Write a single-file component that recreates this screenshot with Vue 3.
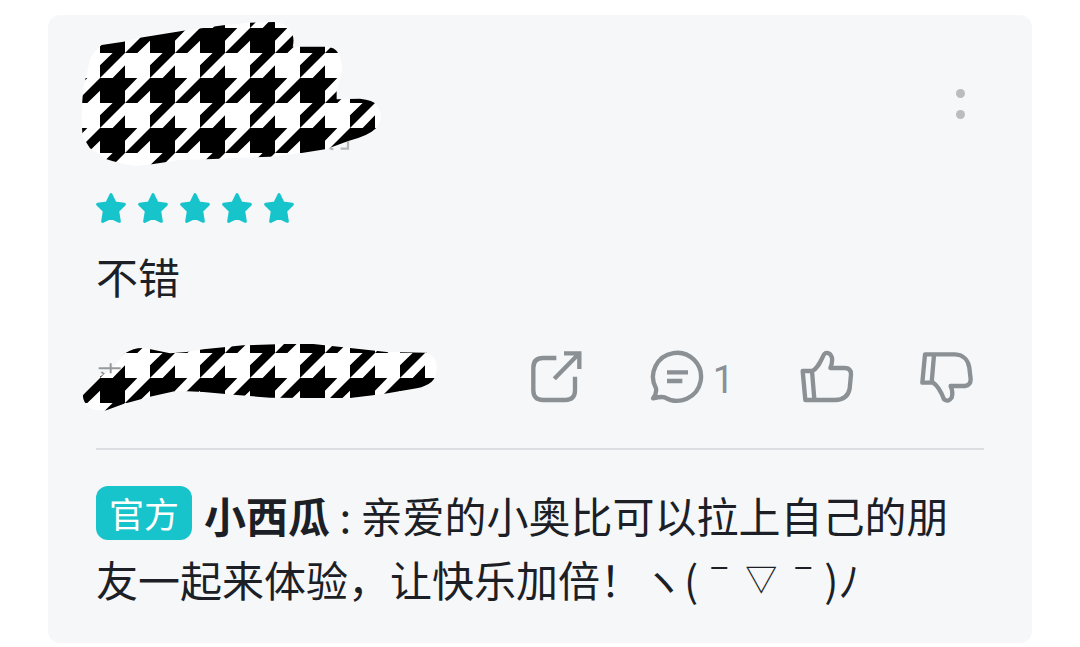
<script setup>
const stars = [1, 2, 3, 4, 5]
const commentCount = 1

// One houndstooth check, drawn in a 150-unit tile
const tooth = 'M0 0H112L75 38V75L150 0V38L112 75H75L0 150V112L38 75H0ZM75 112V150H38Z'

function tiles(left, top, columns, rows) {
  const list = []
  for (let r = 0; r < rows; r++) {
    for (let c = 0; c < columns; c++) {
      list.push(`translate(${left + c * 150} ${top + r * 150})`)
    }
  }
  return list
}

const authorTiles = tiles(-60, -96, 7, 4)
const deviceTiles = tiles(-60, -6, 8, 2)
</script>

<template>
  <main class="page">
    <article class="card">
      <header class="head">
        <svg class="author-mask" viewBox="30 30 906 444" aria-hidden="true">
          <defs>
            <clipPath id="author-shape">
              <path d="M40 230Q50 195 55 170Q60 130 95 105L160 95L210 83L340 62L460 46L540 38L612 36Q645 38 658 58Q676 80 668 110H770Q795 112 804 128Q822 165 812 200L800 240V268L870 266Q910 270 920 285Q945 320 918 355Q895 378 835 393L770 417L700 428L600 440L430 447L330 450L250 462L200 468Q150 462 110 448L60 415L38 380Q34 340 35 300Z" />
            </clipPath>
          </defs>
          <path d="M778 414L790 418M812 416H834V390" fill="none" stroke="#b5b8bb" stroke-width="7" />
          <g clip-path="url(#author-shape)">
            <rect x="30" y="30" width="906" height="444" fill="#fff" />
            <path v-for="t in authorTiles" :key="t" :d="tooth" :transform="t" />
          </g>
        </svg>
        <button class="more" type="button" aria-label="更多">
          <span class="dot"></span>
          <span class="dot"></span>
        </button>
      </header>

      <div class="stars" role="img" aria-label="5 星">
        <svg v-for="s in stars" :key="s" viewBox="0 0 90 90" aria-hidden="true">
          <path d="M45 5L57 30L85 34L65 54L70 85L45 73L20 85L25 54L5 34L33 30Z" />
        </svg>
      </div>

      <p class="review">不错</p>

      <div class="meta">
        <svg class="device-mask" viewBox="30 30 1080 222" aria-hidden="true">
          <defs>
            <clipPath id="device-shape">
              <path d="M38 195L60 170L90 140L130 112L165 70Q200 48 235 56L300 70L350 66L400 58L520 46L640 42H730L820 52L950 66L1070 68Q1096 76 1100 105Q1102 140 1085 155Q1070 168 1040 175L940 192L840 204H720L600 203L500 195L400 186L320 182L240 200L160 222L105 242Q70 240 60 235Q40 220 38 195Z" />
            </clipPath>
          </defs>
          <g clip-path="url(#device-shape)">
            <rect x="30" y="30" width="1080" height="222" fill="#fff" />
            <path v-for="t in deviceTiles" :key="t" :d="tooth" :transform="t" />
          </g>
          <path d="M86 115H152M122 100V130M94 126L102 132" fill="none" stroke="#96999d" stroke-width="6" />
        </svg>

        <div class="actions">
          <button type="button" aria-label="分享">
            <svg viewBox="60 45 162 162" aria-hidden="true">
              <path d="M139 69H99Q70 69 70 98V166Q70 195 99 195H166Q195 195 195 166V125" />
              <path d="M162 55H208V102M133 131L206 57" />
            </svg>
          </button>
          <button type="button" aria-label="评论">
            <svg viewBox="420 42 162 162" aria-hidden="true">
              <path d="M438 157A72 72 0 1 1 464 184Q455 181 429 187Q441 172 438 157Z" stroke-linejoin="round" />
              <path d="M471 109H534M471 135H517" />
            </svg>
            <span class="count">{{ commentCount }}</span>
          </button>
          <button type="button" aria-label="赞">
            <svg viewBox="60 42 162 162" aria-hidden="true">
              <path d="M68 105L76 192H165C190 192 205 180 209 158L213 115Q213 96 194 96H151Q158 80 156 65Q150 48 137 51Q132 53 129 61C120 80 112 98 96 105ZM96 105L103 190" stroke-linejoin="round" />
            </svg>
          </button>
          <button type="button" aria-label="踩">
            <svg viewBox="420 42 162 162" aria-hidden="true">
              <path d="M435 55H525C552 56 565 75 568 95L572 130Q572 148 555 150H512Q520 168 515 185Q505 200 492 190C485 172 472 148 459 140H427ZM462 57L455 140" stroke-linejoin="round" />
            </svg>
          </button>
        </div>
      </div>

      <p class="reply"><span class="badge">官方</span><strong>小西瓜</strong> : 亲爱的小奥比可以拉上自己的朋友一起来体验，让快乐加倍！ヽ(ˉ<span class="mouth">▽</span>ˉ)ﾉ</p>
    </article>
  </main>
</template>

<style>
body {
  background: #fff;
}
</style>

<style scoped>
.page {
  padding: 15px 48px 4px;
  font-family: "Noto Sans CJK SC", sans-serif;
  color: #1d1f26;
}
.card {
  padding: 5px 48px 32px;
  border-radius: 12px;
  background: #f5f7f9;
}
.head {
  display: flex;
  justify-content: space-between;
  align-items: center;
}
.author-mask {
  width: 302px;
  margin-left: -16px;
}
.more {
  display: flex;
  flex-direction: column;
  align-items: center;
  gap: 12px;
  width: 48px;
  padding: 20px 0 0;
  border: 0;
  background: none;
}
.dot {
  width: 9px;
  height: 9px;
  border-radius: 50%;
  background: #bbbcbe;
}
.stars {
  display: flex;
  gap: 12px;
  margin-top: 25px;
}
.stars svg {
  width: 30px;
  height: 30px;
  fill: #17c4cb;
  stroke: #17c4cb;
  stroke-width: 9;
  stroke-linejoin: round;
}
.review {
  margin: 21px 0 0;
  font-size: 42px;
  line-height: 64px;
}
.meta {
  display: flex;
  justify-content: space-between;
  align-items: center;
  margin-top: 32px;
  padding-right: 10px;
}
.device-mask {
  width: 360px;
  margin-left: -16px;
}
.actions {
  display: flex;
  gap: 66px;
}
.actions button {
  display: flex;
  align-items: center;
  gap: 9px;
  padding: 0;
  border: 0;
  background: none;
  color: #8b9095;
}
.actions svg {
  width: 54px;
  height: 54px;
  fill: none;
  stroke: currentColor;
  stroke-width: 13;
}
.count {
  font-family: Roboto, sans-serif;
  font-size: 38px;
  line-height: 60px;
  height: 54px;
}
.reply {
  margin: 34px 0 0;
  padding-top: 33px;
  border-top: 2px solid #dcdee1;
  font-size: 42px;
  line-height: 64px;
}
.badge {
  display: inline-block;
  margin-right: 12px;
  padding: 0 13px;
  border-radius: 12px;
  background: #17c4cb;
  color: #fff;
  font-size: 35px;
  line-height: 54px;
  vertical-align: 5px;
}
.mouth {
  display: inline-block;
  width: 42px;
  font-size: 32px;
  line-height: 32px;
  text-align: center;
  vertical-align: 6px;
}
</style>
